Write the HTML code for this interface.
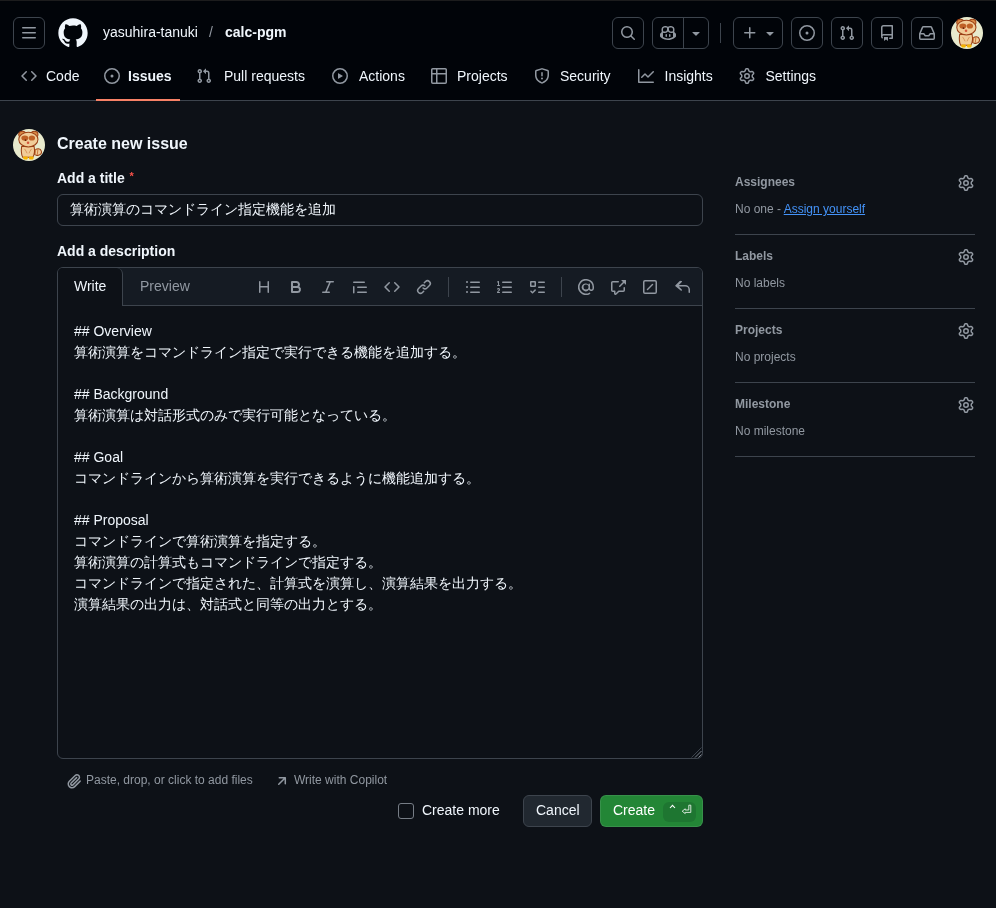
<!DOCTYPE html>
<html><head><meta charset="utf-8">
<style>
*{box-sizing:border-box;margin:0;padding:0}
html{width:996px;height:908px;overflow:hidden;background:#0d1117;font-family:"Liberation Sans",sans-serif;color:#f0f6fc;font-size:14px;line-height:20px}
.a{position:absolute}
body{will-change:transform;width:996px;height:908px;overflow:hidden;background:#0d1117;font-family:"Liberation Sans",sans-serif;color:#f0f6fc;font-size:14px;line-height:20px}
svg{display:block}
.hdr{position:absolute;left:0;top:0;width:996px;height:101px;background:#010409;border-bottom:1px solid #3d444d}
.topline{position:absolute;left:0;top:0;width:996px;height:1px;background:#1c1c1d}
.btn{position:absolute;top:17px;height:32px;border:1px solid #3d444d;border-radius:6px}
.ic{fill:#9198a1}
.nav{position:absolute;top:66px;height:20px;font-size:14px;line-height:20px;color:#f0f6fc;white-space:nowrap}
.navi{position:absolute;top:68px}
</style></head>
<body>
<div class="hdr"></div>
<div class="topline"></div>

<!-- hamburger -->
<div class="btn" style="left:13px;width:32px"></div>
<svg class="a" style="left:21px;top:25px" width="16" height="16" viewBox="0 0 16 16"><path class="ic" d="M1 2.75A.75.75 0 0 1 1.75 2h12.5a.75.75 0 0 1 0 1.5H1.75A.75.75 0 0 1 1 2.75Zm0 5A.75.75 0 0 1 1.75 7h12.5a.75.75 0 0 1 0 1.5H1.75A.75.75 0 0 1 1 7.75ZM1.75 12h12.5a.75.75 0 0 1 0 1.5H1.75a.75.75 0 0 1 0-1.5Z"/></svg>
<!-- github logo -->
<svg class="a" style="left:57px;top:17px" width="32" height="32" viewBox="0 0 24 24"><path fill="#f0f6fc" d="M12 1C5.923 1 1 5.923 1 12c0 4.867 3.149 8.979 7.521 10.436.55.096.756-.233.756-.522 0-.262-.013-1.128-.013-2.049-2.764.509-3.479-.674-3.699-1.292-.124-.317-.66-1.293-1.127-1.554-.385-.207-.936-.715-.014-.729.866-.014 1.485.797 1.691 1.128.99 1.663 2.571 1.196 3.204.907.096-.715.385-1.196.701-1.471-2.448-.275-5.005-1.224-5.005-5.432 0-1.196.426-2.186 1.128-2.956-.111-.275-.496-1.402.11-2.915 0 0 .921-.288 3.024 1.128a10.193 10.193 0 0 1 2.75-.371c.936 0 1.871.123 2.75.371 2.104-1.43 3.025-1.128 3.025-1.128.605 1.513.221 2.64.111 2.915.701.77 1.127 1.747 1.127 2.956 0 4.222-2.571 5.157-5.019 5.432.399.344.743 1.004.743 2.035 0 1.471-.014 2.654-.014 3.108 0 .289.206.632.756.522C19.851 20.979 23 16.854 23 12c0-6.077-4.922-11-11-11Z"/></svg>
<div class="a" style="left:103px;top:22px;color:#f0f6fc">yasuhira-tanuki</div>
<div class="a" style="left:209px;top:22px;color:#9198a1">/</div>
<div class="a" style="left:225px;top:22px;color:#f0f6fc;font-weight:bold">calc-pgm</div>

<!-- right header buttons -->
<div class="btn" style="left:612px;width:32px"></div>
<div class="btn" style="left:652px;width:57px"></div>
<div class="a" style="left:683px;top:18px;width:1px;height:30px;background:#3d444d"></div>
<div class="a" style="left:720px;top:23px;width:1px;height:20px;background:#3d444d"></div>
<div class="btn" style="left:733px;width:50px"></div>
<div class="btn" style="left:791px;width:32px"></div>
<div class="btn" style="left:831px;width:32px"></div>
<div class="btn" style="left:871px;width:32px"></div>
<div class="btn" style="left:911px;width:32px"></div>

<!-- nav -->
<div class="a" style="left:96px;top:99px;width:84px;height:2px;background:#f78166"></div>
<div class="nav" style="left:46px">Code</div>
<div class="nav" style="left:128px;font-weight:bold">Issues</div>
<div class="nav" style="left:224px">Pull requests</div>
<div class="nav" style="left:359px">Actions</div>
<div class="nav" style="left:457px">Projects</div>
<div class="nav" style="left:560px">Security</div>
<div class="nav" style="left:664.5px">Insights</div>
<div class="nav" style="left:765.5px">Settings</div>

<!-- body -->
<div class="a" style="left:57px;top:132px;font-size:16px;line-height:24px;font-weight:bold">Create new issue</div>
<div class="a" style="left:57px;top:168px;font-weight:bold">Add a title</div><div class="a" style="left:129.5px;top:169px;font-size:11px;line-height:14px;font-weight:bold;color:#f85149">*</div>
<div class="a" style="left:57px;top:194px;width:646px;height:32px;border:1px solid #3d444d;border-radius:6px;padding-left:12px;line-height:28px">算術演算のコマンドライン指定機能を追加</div>
<div class="a" style="left:57px;top:241px;font-weight:bold">Add a description</div>

<!-- editor -->
<div class="a" style="left:57px;top:267px;width:646px;height:492px;border:1px solid #3d444d;border-radius:6px;overflow:hidden">
  <div class="a" style="left:0;top:0;width:644px;height:38px;background:#151b23;border-bottom:1px solid #3d444d"></div>
  <div class="a" style="left:0;top:0;width:65px;height:38px;background:#0d1117;border-right:1px solid #3d444d;border-top-right-radius:6px"></div>
</div>
<div class="a" style="left:74px;top:276px">Write</div>
<div class="a" style="left:140px;top:276px;color:#9198a1">Preview</div>

<div class="a" style="left:74px;top:321px;line-height:21px;white-space:pre">## Overview
算術演算をコマンドライン指定で実行できる機能を追加する。

## Background
算術演算は対話形式のみで実行可能となっている。

## Goal
コマンドラインから算術演算を実行できるように機能追加する。

## Proposal
コマンドラインで算術演算を指定する。
算術演算の計算式もコマンドラインで指定する。
コマンドラインで指定された、計算式を演算し、演算結果を出力する。
演算結果の出力は、対話式と同等の出力とする。</div>

<div class="a" style="left:86px;top:771px;font-size:12px;line-height:18px;color:#9198a1">Paste, drop, or click to add files</div>
<div class="a" style="left:294px;top:771px;font-size:12px;line-height:18px;color:#9198a1">Write with Copilot</div>

<div class="a" style="left:398px;top:803px;width:16px;height:16px;border:1px solid #767d86;border-radius:3px"></div>
<div class="a" style="left:422px;top:800px">Create more</div>
<div class="a" style="left:523px;top:795px;width:69px;height:32px;background:#212830;border:1px solid #3d444d;border-radius:6px"></div>
<div class="a" style="left:536px;top:800px">Cancel</div>
<div class="a" style="left:600px;top:795px;width:103px;height:32px;background:#238636;border:1px solid rgba(240,246,252,0.1);border-radius:6px"></div>
<div class="a" style="left:613px;top:800px;color:#fff">Create</div>
<div class="a" style="left:663px;top:802px;width:33px;height:20px;background:#1e7631;border-radius:6px"></div>
<svg class="a" style="left:663px;top:802px" width="33" height="20" viewBox="0 0 33 20"><path d="M7 6 9.5 3.3 12 6" fill="none" stroke="#fff" stroke-width="1.1"/><path d="M25.8 3.2H27.8V10.4H22.2V11.6L19.2 9.2 22.2 6.8V8H25.8Z" fill="none" stroke="#e6f0e8" stroke-width="0.9"/></svg>
<svg class="a" style="left:688px;top:745px" width="14" height="14" viewBox="0 0 14 14"><path d="M3.5 12.5 13.5 2.5" stroke="#3d444d" stroke-width="1"/><path d="M7 12.5 13.5 6M10.5 12.5 13.5 9.5" stroke="#7d848d" stroke-width="1"/></svg>

<!-- sidebar -->
<div class="a" style="left:735px;top:173px;font-size:12px;line-height:18px;font-weight:bold;color:#9198a1">Assignees</div>
<div class="a" style="left:735px;top:200px;font-size:12px;line-height:18px;color:#9198a1">No one - <span style="color:#4493f8;text-decoration:underline">Assign yourself</span></div>
<div class="a" style="left:735px;top:234px;width:240px;height:1px;background:#3d444d"></div>
<div class="a" style="left:735px;top:247px;font-size:12px;line-height:18px;font-weight:bold;color:#9198a1">Labels</div>
<div class="a" style="left:735px;top:274px;font-size:12px;line-height:18px;color:#9198a1">No labels</div>
<div class="a" style="left:735px;top:308px;width:240px;height:1px;background:#3d444d"></div>
<div class="a" style="left:735px;top:321px;font-size:12px;line-height:18px;font-weight:bold;color:#9198a1">Projects</div>
<div class="a" style="left:735px;top:348px;font-size:12px;line-height:18px;color:#9198a1">No projects</div>
<div class="a" style="left:735px;top:382px;width:240px;height:1px;background:#3d444d"></div>
<div class="a" style="left:735px;top:395px;font-size:12px;line-height:18px;font-weight:bold;color:#9198a1">Milestone</div>
<div class="a" style="left:735px;top:422px;font-size:12px;line-height:18px;color:#9198a1">No milestone</div>
<div class="a" style="left:735px;top:456px;width:240px;height:1px;background:#3d444d"></div>


<svg class="a" style="left:620px;top:25px" width="16" height="16" viewBox="0 0 16 16"><path fill="#9198a1" d="M10.68 11.74a6 6 0 0 1-7.922-8.982 6 6 0 0 1 8.982 7.922l3.04 3.04a.749.749 0 0 1-.326 1.275.749.749 0 0 1-.734-.215ZM11.5 7a4.499 4.499 0 1 0-8.997 0A4.499 4.499 0 0 0 11.5 7Z"/></svg>
<svg class="a" style="left:660px;top:25px" width="16" height="16" viewBox="0 0 16 16"><path fill="#9198a1" d="M7.998 15.035c-4.562 0-7.873-2.914-7.998-3.749V9.338c.085-.628.677-1.686 1.588-2.065.013-.07.024-.143.036-.218.029-.183.06-.384.126-.612-.201-.508-.254-1.084-.254-1.656 0-.87.128-1.769.693-2.484.579-.733 1.494-1.124 2.724-1.261 1.206-.134 2.262.034 2.944.765.05.053.096.108.139.165.044-.057.094-.112.143-.165.682-.731 1.738-.899 2.944-.765 1.23.137 2.145.528 2.724 1.261.566.715.693 1.614.693 2.484 0 .572-.053 1.148-.254 1.656.066.228.098.429.126.612.012.076.024.148.037.218.924.385 1.522 1.471 1.591 2.095v1.872c0 .766-3.351 3.795-8.002 3.795Zm0-1.485c2.28 0 4.584-1.11 5.002-1.433V7.862l-.023-.116c-.49.21-1.075.291-1.727.291-1.146 0-2.059-.327-2.71-.991A3.222 3.222 0 0 1 8 6.303a3.24 3.24 0 0 1-.544.743c-.65.664-1.563.991-2.71.991-.652 0-1.236-.081-1.727-.291l-.023.116v4.255c.419.323 2.722 1.433 5.002 1.433ZM6.762 2.83c-.193-.206-.637-.413-1.682-.297-1.019.113-1.479.404-1.713.7-.247.312-.369.789-.369 1.554 0 .793.129 1.171.308 1.371.162.181.519.379 1.442.379.853 0 1.339-.235 1.638-.54.315-.322.527-.827.617-1.553.117-.935-.037-1.395-.241-1.614Zm4.155-.297c-1.044-.116-1.488.091-1.681.297-.204.219-.359.679-.242 1.614.091.726.303 1.231.618 1.553.299.305.784.54 1.638.54.922 0 1.28-.198 1.442-.379.179-.2.308-.578.308-1.371 0-.765-.123-1.242-.37-1.554-.233-.296-.693-.587-1.713-.7Z M6.25 9.037a.75.75 0 0 1 .75.75v1.501a.75.75 0 0 1-1.5 0V9.787a.75.75 0 0 1 .75-.75Zm4.25.75v1.501a.75.75 0 0 1-1.5 0V9.787a.75.75 0 0 1 1.5 0Z"/></svg>
<svg class="a" style="left:688px;top:25px" width="16" height="16" viewBox="0 0 16 16"><path fill="#9198a1" d="m4.427 7.427 3.396 3.396a.25.25 0 0 0 .354 0l3.396-3.396A.25.25 0 0 0 11.396 7H4.604a.25.25 0 0 0-.177.427Z"/></svg>
<svg class="a" style="left:742px;top:25px" width="16" height="16" viewBox="0 0 16 16"><path fill="#9198a1" d="M7.75 2a.75.75 0 0 1 .75.75V7h4.25a.75.75 0 0 1 0 1.5H8.5v4.25a.75.75 0 0 1-1.5 0V8.5H2.75a.75.75 0 0 1 0-1.5H7V2.75A.75.75 0 0 1 7.75 2Z"/></svg>
<svg class="a" style="left:762px;top:25px" width="16" height="16" viewBox="0 0 16 16"><path fill="#9198a1" d="m4.427 7.427 3.396 3.396a.25.25 0 0 0 .354 0l3.396-3.396A.25.25 0 0 0 11.396 7H4.604a.25.25 0 0 0-.177.427Z"/></svg>
<svg class="a" style="left:799px;top:25px" width="16" height="16" viewBox="0 0 16 16"><path fill="#9198a1" d="M8 9.5a1.5 1.5 0 1 0 0-3 1.5 1.5 0 0 0 0 3Z M8 0a8 8 0 1 1 0 16A8 8 0 0 1 8 0ZM1.5 8a6.5 6.5 0 1 0 13 0 6.5 6.5 0 0 0-13 0Z"/></svg>
<svg class="a" style="left:839px;top:25px" width="16" height="16" viewBox="0 0 16 16"><path fill="#9198a1" d="M1.5 3.25a2.25 2.25 0 1 1 3 2.122v5.256a2.251 2.251 0 1 1-1.5 0V5.372A2.25 2.25 0 0 1 1.5 3.25Zm5.677-.177L9.573.677A.25.25 0 0 1 10 .854V2.5h1A2.5 2.5 0 0 1 13.5 5v5.628a2.251 2.251 0 1 1-1.5 0V5a1 1 0 0 0-1-1h-1v1.646a.25.25 0 0 1-.427.177L7.177 3.427a.25.25 0 0 1 0-.354ZM3.75 2.5a.75.75 0 1 0 0 1.5.75.75 0 0 0 0-1.5Zm0 9.5a.75.75 0 1 0 0 1.5.75.75 0 0 0 0-1.5Zm8.25.75a.75.75 0 1 0 1.5 0 .75.75 0 0 0-1.5 0Z"/></svg>
<svg class="a" style="left:879px;top:25px" width="16" height="16" viewBox="0 0 16 16"><path fill="#9198a1" d="M2 2.5A2.5 2.5 0 0 1 4.5 0h8.75a.75.75 0 0 1 .75.75v12.5a.75.75 0 0 1-.75.75h-2.5a.75.75 0 0 1 0-1.5h1.75v-2h-8a1 1 0 0 0-.714 1.7.75.75 0 1 1-1.072 1.05A2.495 2.495 0 0 1 2 11.5Zm10.5-1h-8a1 1 0 0 0-1 1v6.708A2.486 2.486 0 0 1 4.5 9h8ZM5 12.25a.25.25 0 0 1 .25-.25h3.5a.25.25 0 0 1 .25.25v3.25a.25.25 0 0 1-.4.2l-1.45-1.087a.249.249 0 0 0-.3 0L5.4 15.7a.25.25 0 0 1-.4-.2Z"/></svg>
<svg class="a" style="left:919px;top:25px" width="16" height="16" viewBox="0 0 16 16"><path fill="#9198a1" d="M2.8 2.06A1.75 1.75 0 0 1 4.41 1h7.18c.7 0 1.333.417 1.61 1.06l2.74 6.395c.04.093.06.194.06.295v4.5A1.75 1.75 0 0 1 14.25 15H1.75A1.75 1.75 0 0 1 0 13.25v-4.5c0-.101.02-.202.06-.295Zm1.61.44a.25.25 0 0 0-.23.152L1.887 8H4.75a.75.75 0 0 1 .6.3L6.625 10h2.75l1.275-1.7a.75.75 0 0 1 .6-.3h2.863L11.82 2.652a.25.25 0 0 0-.23-.152Zm10.09 7h-2.875l-1.275 1.7a.75.75 0 0 1-.6.3h-3.5a.75.75 0 0 1-.6-.3L4.375 9.5H1.5v3.75c0 .138.112.25.25.25h12.5a.25.25 0 0 0 .25-.25Z"/></svg>
<svg class="a" style="left:21px;top:68px" width="16" height="16" viewBox="0 0 16 16"><path fill="#9198a1" d="m11.28 3.22 4.25 4.25a.75.75 0 0 1 0 1.06l-4.25 4.25a.749.749 0 0 1-1.275-.326.749.749 0 0 1 .215-.734L13.94 8l-3.72-3.72a.749.749 0 0 1 .326-1.275.749.749 0 0 1 .734.215Zm-6.56 0a.751.751 0 0 1 1.042.018.751.751 0 0 1 .018 1.042L2.06 8l3.72 3.72a.749.749 0 0 1-.326 1.275.749.749 0 0 1-.734-.215L.47 8.53a.75.75 0 0 1 0-1.06Z"/></svg>
<svg class="a" style="left:104px;top:68px" width="16" height="16" viewBox="0 0 16 16"><path fill="#9198a1" d="M8 9.5a1.5 1.5 0 1 0 0-3 1.5 1.5 0 0 0 0 3Z M8 0a8 8 0 1 1 0 16A8 8 0 0 1 8 0ZM1.5 8a6.5 6.5 0 1 0 13 0 6.5 6.5 0 0 0-13 0Z"/></svg>
<svg class="a" style="left:196px;top:68px" width="16" height="16" viewBox="0 0 16 16"><path fill="#9198a1" d="M1.5 3.25a2.25 2.25 0 1 1 3 2.122v5.256a2.251 2.251 0 1 1-1.5 0V5.372A2.25 2.25 0 0 1 1.5 3.25Zm5.677-.177L9.573.677A.25.25 0 0 1 10 .854V2.5h1A2.5 2.5 0 0 1 13.5 5v5.628a2.251 2.251 0 1 1-1.5 0V5a1 1 0 0 0-1-1h-1v1.646a.25.25 0 0 1-.427.177L7.177 3.427a.25.25 0 0 1 0-.354ZM3.75 2.5a.75.75 0 1 0 0 1.5.75.75 0 0 0 0-1.5Zm0 9.5a.75.75 0 1 0 0 1.5.75.75 0 0 0 0-1.5Zm8.25.75a.75.75 0 1 0 1.5 0 .75.75 0 0 0-1.5 0Z"/></svg>
<svg class="a" style="left:332px;top:68px" width="16" height="16" viewBox="0 0 16 16"><path fill="#9198a1" d="M8 0a8 8 0 1 1 0 16A8 8 0 0 1 8 0ZM1.5 8a6.5 6.5 0 1 0 13 0 6.5 6.5 0 0 0-13 0Zm4.879-2.773 4.264 2.559a.25.25 0 0 1 0 .428l-4.264 2.559A.25.25 0 0 1 6 10.559V5.442a.25.25 0 0 1 .379-.215Z"/></svg>
<svg class="a" style="left:431px;top:68px" width="16" height="16" viewBox="0 0 16 16"><path fill="#9198a1" d="M0 1.75C0 .784.784 0 1.75 0h12.5C15.216 0 16 .784 16 1.75v12.5A1.75 1.75 0 0 1 14.25 16H1.75A1.75 1.75 0 0 1 0 14.25ZM6.5 6.5v8h7.75a.25.25 0 0 0 .25-.25V6.5Zm8-1.5V1.75a.25.25 0 0 0-.25-.25H6.5V5Zm-13 1.5v7.75c0 .138.112.25.25.25H5v-8ZM5 5V1.5H1.75a.25.25 0 0 0-.25.25V5Z"/></svg>
<svg class="a" style="left:534px;top:68px" width="16" height="16" viewBox="0 0 16 16"><path fill="#9198a1" d="M7.467.133a1.748 1.748 0 0 1 1.066 0l5.25 1.68A1.75 1.75 0 0 1 15 3.48V7c0 1.566-.32 3.182-1.303 4.682-.983 1.498-2.585 2.813-5.032 3.855a1.697 1.697 0 0 1-1.33 0c-2.447-1.042-4.049-2.357-5.032-3.855C1.32 10.182 1 8.566 1 7V3.48a1.755 1.755 0 0 1 1.217-1.667Zm.61 1.429a.25.25 0 0 0-.153 0l-5.25 1.68a.25.25 0 0 0-.174.238V7c0 1.358.275 2.666 1.057 3.86.784 1.194 2.121 2.34 4.366 3.297a.196.196 0 0 0 .154 0c2.245-.956 3.582-2.104 4.366-3.298C13.225 9.666 13.5 8.36 13.5 7V3.48a.251.251 0 0 0-.174-.237l-5.25-1.68ZM8.75 4.75v3a.75.75 0 0 1-1.5 0v-3a.75.75 0 0 1 1.5 0ZM9 10.5a1 1 0 1 1-2 0 1 1 0 0 1 2 0Z"/></svg>
<svg class="a" style="left:638px;top:68px" width="16" height="16" viewBox="0 0 16 16"><path fill="#9198a1" d="M1.5 1.75V13.5h13.75a.75.75 0 0 1 0 1.5H.75a.75.75 0 0 1-.75-.75V1.75a.75.75 0 0 1 1.5 0Zm14.28 2.53-5.25 5.25a.75.75 0 0 1-1.06 0L7 7.06 4.28 9.78a.751.751 0 0 1-1.042-.018.751.751 0 0 1-.018-1.042l3.25-3.25a.75.75 0 0 1 1.06 0L10 7.94l4.72-4.72a.751.751 0 0 1 1.042.018.751.751 0 0 1 .018 1.042Z"/></svg>
<svg class="a" style="left:739px;top:68px" width="16" height="16" viewBox="0 0 16 16"><path fill="#9198a1" d="M8 0a8.2 8.2 0 0 1 .701.031C9.444.095 9.99.645 10.16 1.29l.288 1.107c.018.066.079.158.212.224.231.114.454.243.668.386.123.082.233.09.299.071l1.103-.303c.644-.176 1.392.021 1.82.63.27.385.506.792.704 1.218.315.675.111 1.422-.364 1.891l-.814.806c-.049.048-.098.147-.088.294.016.257.016.515 0 .772-.01.147.038.246.088.294l.814.806c.475.469.679 1.216.364 1.891a7.977 7.977 0 0 1-.704 1.217c-.428.61-1.176.807-1.82.63l-1.102-.302c-.067-.019-.177-.011-.3.071a5.909 5.909 0 0 1-.668.386c-.133.066-.194.158-.211.224l-.29 1.106c-.168.646-.715 1.196-1.458 1.26a8.006 8.006 0 0 1-1.402 0c-.743-.064-1.289-.614-1.458-1.26l-.289-1.106c-.018-.066-.079-.158-.212-.224a5.738 5.738 0 0 1-.668-.386c-.123-.082-.233-.09-.299-.071l-1.103.303c-.644.176-1.392-.021-1.82-.63a8.12 8.12 0 0 1-.704-1.218c-.315-.675-.111-1.422.363-1.891l.815-.806c.05-.048.098-.147.088-.294a6.214 6.214 0 0 1 0-.772c.01-.147-.038-.246-.088-.294l-.815-.806C.635 6.045.431 5.298.746 4.623a7.92 7.92 0 0 1 .704-1.217c.428-.61 1.176-.807 1.82-.63l1.102.302c.067.019.177.011.3-.071.214-.143.437-.272.668-.386.133-.066.194-.158.211-.224l.29-1.106C6.009.645 6.556.095 7.299.03 7.53.01 7.764 0 8 0Zm-.571 1.525c-.036.003-.108.036-.137.146l-.289 1.105c-.147.561-.549.967-.998 1.189-.173.086-.34.183-.5.29-.417.278-.97.423-1.529.27l-1.103-.303c-.109-.03-.175.016-.195.045-.22.312-.412.644-.573.99-.014.031-.021.11.059.19l.815.806c.411.406.562.957.53 1.456a4.709 4.709 0 0 0 0 .582c.032.499-.119 1.05-.53 1.456l-.815.806c-.081.08-.073.159-.059.19.162.346.353.677.573.989.02.03.085.076.195.046l1.102-.303c.56-.153 1.113-.008 1.53.27.161.107.328.204.501.29.447.222.85.629.997 1.189l.289 1.105c.029.109.101.143.137.146a6.6 6.6 0 0 0 1.142 0c.036-.003.108-.036.137-.146l.289-1.105c.147-.561.549-.967.998-1.189.173-.086.34-.183.5-.29.417-.278.97-.423 1.529-.27l1.103.303c.109.029.175-.016.195-.045.22-.313.411-.644.573-.99.014-.031.021-.11-.059-.19l-.815-.806c-.411-.406-.562-.957-.53-1.456a4.709 4.709 0 0 0 0-.582c-.032-.499.119-1.05.53-1.456l.815-.806c.081-.08.073-.159.059-.19a6.464 6.464 0 0 0-.573-.989c-.02-.03-.085-.076-.195-.046l-1.102.303c-.56.153-1.113.008-1.53-.27a4.44 4.44 0 0 0-.501-.29c-.447-.222-.85-.629-.997-1.189l-.289-1.105c-.029-.11-.101-.143-.137-.146a6.6 6.6 0 0 0-1.142 0ZM11 8a3 3 0 1 1-6 0 3 3 0 0 1 6 0ZM9.5 8a1.5 1.5 0 1 0-3.001.001A1.5 1.5 0 0 0 9.5 8Z"/></svg>
<svg class="a" style="left:256px;top:279px" width="16" height="16" viewBox="0 0 16 16"><path fill="#9198a1" d="M3.75 2a.75.75 0 0 1 .75.75V7h7V2.75a.75.75 0 0 1 1.5 0v10.5a.75.75 0 0 1-1.5 0V8.5h-7v4.75a.75.75 0 0 1-1.5 0V2.75A.75.75 0 0 1 3.75 2Z"/></svg>
<svg class="a" style="left:288px;top:279px" width="16" height="16" viewBox="0 0 16 16"><path fill="#9198a1" d="M4 2h4.5a3.501 3.501 0 0 1 2.852 5.53A3.499 3.499 0 0 1 9.5 14H4a1 1 0 0 1-1-1V3a1 1 0 0 1 1-1Zm1 7v3h4.5a1.5 1.5 0 0 0 0-3Zm3.5-2a1.5 1.5 0 0 0 0-3H5v3Z"/></svg>
<svg class="a" style="left:320px;top:279px" width="16" height="16" viewBox="0 0 16 16"><path fill="#9198a1" d="M6 2.75A.75.75 0 0 1 6.75 2h6.5a.75.75 0 0 1 0 1.5h-2.505l-3.858 9H9.25a.75.75 0 0 1 0 1.5h-6.5a.75.75 0 0 1 0-1.5h2.505l3.858-9H6.75A.75.75 0 0 1 6 2.75Z"/></svg>
<svg class="a" style="left:352px;top:279px" width="16" height="16" viewBox="0 0 16 16"><path fill="#9198a1" d="M1.75 2.5h10.5a.75.75 0 0 1 0 1.5H1.75a.75.75 0 0 1 0-1.5Zm4 5h8.5a.75.75 0 0 1 0 1.5h-8.5a.75.75 0 0 1 0-1.5Zm0 5h8.5a.75.75 0 0 1 0 1.5h-8.5a.75.75 0 0 1 0-1.5ZM2.5 7.75v6a.75.75 0 0 1-1.5 0v-6a.75.75 0 0 1 1.5 0Z"/></svg>
<svg class="a" style="left:384px;top:279px" width="16" height="16" viewBox="0 0 16 16"><path fill="#9198a1" d="m11.28 3.22 4.25 4.25a.75.75 0 0 1 0 1.06l-4.25 4.25a.749.749 0 0 1-1.275-.326.749.749 0 0 1 .215-.734L13.94 8l-3.72-3.72a.749.749 0 0 1 .326-1.275.749.749 0 0 1 .734.215Zm-6.56 0a.751.751 0 0 1 1.042.018.751.751 0 0 1 .018 1.042L2.06 8l3.72 3.72a.749.749 0 0 1-.326 1.275.749.749 0 0 1-.734-.215L.47 8.53a.75.75 0 0 1 0-1.06Z"/></svg>
<svg class="a" style="left:416px;top:279px" width="16" height="16" viewBox="0 0 16 16"><path fill="#9198a1" d="m7.775 3.275 1.25-1.25a3.5 3.5 0 1 1 4.95 4.95l-2.5 2.5a3.5 3.5 0 0 1-4.95 0 .751.751 0 0 1 .018-1.042.751.751 0 0 1 1.042-.018 1.998 1.998 0 0 0 2.83 0l2.5-2.5a2.002 2.002 0 0 0-2.83-2.830l-1.25 1.25a.751.751 0 0 1-1.042-.018.751.751 0 0 1-.018-1.042Zm-4.69 9.64a1.998 1.998 0 0 0 2.83 0l1.25-1.25a.751.751 0 0 1 1.042.018.751.751 0 0 1 .018 1.042l-1.25 1.25a3.5 3.5 0 1 1-4.95-4.95l2.5-2.5a3.5 3.5 0 0 1 4.95 0 .751.751 0 0 1-.018 1.042.751.751 0 0 1-1.042.018 1.998 1.998 0 0 0-2.83 0l-2.5 2.5a1.998 1.998 0 0 0 0 2.83Z"/></svg>
<svg class="a" style="left:465px;top:279px" width="16" height="16" viewBox="0 0 16 16"><path fill="#9198a1" d="M5.75 2.5h8.5a.75.75 0 0 1 0 1.5h-8.5a.75.75 0 0 1 0-1.5Zm0 5h8.5a.75.75 0 0 1 0 1.5h-8.5a.75.75 0 0 1 0-1.5Zm0 5h8.5a.75.75 0 0 1 0 1.5h-8.5a.75.75 0 0 1 0-1.5ZM2 14a1 1 0 1 1 0-2 1 1 0 0 1 0 2Zm1-6a1 1 0 1 1-2 0 1 1 0 0 1 2 0ZM2 4a1 1 0 1 1 0-2 1 1 0 0 1 0 2Z"/></svg>
<svg class="a" style="left:497px;top:279px" width="16" height="16" viewBox="0 0 16 16"><path fill="#9198a1" d="M5 3.25a.75.75 0 0 1 .75-.75h8.5a.75.75 0 0 1 0 1.5h-8.5A.75.75 0 0 1 5 3.25Zm0 5a.75.75 0 0 1 .75-.75h8.5a.75.75 0 0 1 0 1.5h-8.5A.75.75 0 0 1 5 8.25Zm0 5a.75.75 0 0 1 .75-.75h8.5a.75.75 0 0 1 0 1.5h-8.5a.75.75 0 0 1-.75-.75ZM.924 10.32a.5.5 0 0 1-.851-.525l.001-.001.001-.002.002-.004.007-.011c.097-.144.215-.273.348-.384.228-.19.588-.392 1.068-.392.468 0 .858.181 1.126.484.259.294.377.673.377 1.038 0 .987-.686 1.495-1.156 1.845l-.047.035c-.303.225-.522.4-.654.597h1.357a.5.5 0 0 1 0 1H.5a.5.5 0 0 1-.5-.5c0-1.005.692-1.52 1.167-1.875l.035-.025c.531-.396.8-.625.8-1.078a.57.57 0 0 0-.126-.376C1.807 10.3 1.703 10.25 1.5 10.25a.658.658 0 0 0-.429.163.835.835 0 0 0-.144.153ZM2.003 2.5V6h.503a.5.5 0 0 1 0 1H.5a.5.5 0 0 1 0-1h.503V3.308l-.28.14a.5.5 0 0 1-.446-.895l1.003-.5a.5.5 0 0 1 .723.447Z"/></svg>
<svg class="a" style="left:529px;top:279px" width="16" height="16" viewBox="0 0 16 16"><path fill="#9198a1" d="M2 2h4a1 1 0 0 1 1 1v4a1 1 0 0 1-1 1H2a1 1 0 0 1-1-1V3a1 1 0 0 1 1-1Zm4.655 8.595a.75.75 0 0 1 0 1.06L4.03 14.28a.75.75 0 0 1-1.06 0l-1.5-1.5a.749.749 0 0 1 .326-1.275.749.749 0 0 1 .734.215l.97.97 2.095-2.095a.75.75 0 0 1 1.06 0ZM9.75 2.5h5.5a.75.75 0 0 1 0 1.5h-5.5a.75.75 0 0 1 0-1.5Zm0 5h5.5a.75.75 0 0 1 0 1.5h-5.5a.75.75 0 0 1 0-1.5Zm0 5h5.5a.75.75 0 0 1 0 1.5h-5.5a.75.75 0 0 1 0-1.5Zm-7.25-9v3h3v-3Z"/></svg>
<svg class="a" style="left:578px;top:279px" width="16" height="16" viewBox="0 0 16 16"><path fill="#9198a1" d="M4.75 2.37a6.501 6.501 0 0 0 6.5 11.26.75.75 0 0 1 .75 1.298A7.999 7.999 0 0 1 .989 4.148 8 8 0 0 1 16 7.75v1.5a2.75 2.75 0 0 1-5.072 1.475 3.999 3.999 0 0 1-6.65-4.4 4 4 0 0 1 6.222-.687V5.25a.75.75 0 0 1 1.5 0v4a1.25 1.25 0 0 0 2.5 0v-1.5a6.5 6.5 0 0 0-9.75-5.38ZM10.5 8a2.5 2.5 0 1 0-5 0 2.5 2.5 0 0 0 5 0Z"/></svg>
<svg class="a" style="left:610px;top:279px" width="16" height="16" viewBox="0 0 16 16"><path fill="#9198a1" d="M2.75 3.5c-.138 0-.25.112-.25.25v7.5c0 .138.112.25.25.25h2a.75.75 0 0 1 .75.75v2.19l2.72-2.72a.749.749 0 0 1 .53-.22h4.5a.25.25 0 0 0 .25-.25v-2.5a.75.75 0 0 1 1.5 0v2.5A1.75 1.75 0 0 1 13.25 13H9.06l-2.573 2.573A1.458 1.458 0 0 1 4 14.543V13H2.75A1.75 1.75 0 0 1 1 11.25v-7.5C1 2.784 1.784 2 2.75 2h5.5a.75.75 0 0 1 0 1.5ZM16 1.25v4.146a.25.25 0 0 1-.427.177L14.03 4.03l-3.75 3.75a.749.749 0 0 1-1.275-.326.749.749 0 0 1 .215-.734l3.75-3.75-1.543-1.543A.25.25 0 0 1 11.604 1h4.146a.25.25 0 0 1 .25.25Z"/></svg>
<svg class="a" style="left:642px;top:279px" width="16" height="16" viewBox="0 0 16 16"><rect x="1.75" y="1.75" width="12.5" height="12.5" rx="1.25" fill="none" stroke="#9198a1" stroke-width="1.5"/><path d="M5.5 10.5 10.5 5.5" stroke="#9198a1" stroke-width="1.5" stroke-linecap="round"/></svg>
<svg class="a" style="left:675px;top:279px" width="16" height="16" viewBox="0 0 16 16"><path fill="#9198a1" d="M6.78 1.97a.75.75 0 0 1 0 1.06L3.81 6h6.44A4.75 4.75 0 0 1 15 10.75v2.5a.75.75 0 0 1-1.5 0v-2.5a3.25 3.25 0 0 0-3.25-3.25H3.81l2.97 2.97a.749.749 0 0 1-.326 1.275.749.749 0 0 1-.734-.215L.47 7.28a.75.75 0 0 1 0-1.06l4.25-4.25a.75.75 0 0 1 1.06 0Z"/></svg>
<div class="a" style="left:448px;top:277px;width:1px;height:20px;background:#3d444d"></div>
<div class="a" style="left:561px;top:277px;width:1px;height:20px;background:#3d444d"></div>
<svg class="a" style="left:958px;top:175px" width="16" height="16" viewBox="0 0 16 16"><path fill="#9198a1" d="M8 0a8.2 8.2 0 0 1 .701.031C9.444.095 9.99.645 10.16 1.29l.288 1.107c.018.066.079.158.212.224.231.114.454.243.668.386.123.082.233.09.299.071l1.103-.303c.644-.176 1.392.021 1.82.63.27.385.506.792.704 1.218.315.675.111 1.422-.364 1.891l-.814.806c-.049.048-.098.147-.088.294.016.257.016.515 0 .772-.01.147.038.246.088.294l.814.806c.475.469.679 1.216.364 1.891a7.977 7.977 0 0 1-.704 1.217c-.428.61-1.176.807-1.82.63l-1.102-.302c-.067-.019-.177-.011-.3.071a5.909 5.909 0 0 1-.668.386c-.133.066-.194.158-.211.224l-.29 1.106c-.168.646-.715 1.196-1.458 1.26a8.006 8.006 0 0 1-1.402 0c-.743-.064-1.289-.614-1.458-1.26l-.289-1.106c-.018-.066-.079-.158-.212-.224a5.738 5.738 0 0 1-.668-.386c-.123-.082-.233-.09-.299-.071l-1.103.303c-.644.176-1.392-.021-1.82-.63a8.12 8.12 0 0 1-.704-1.218c-.315-.675-.111-1.422.363-1.891l.815-.806c.05-.048.098-.147.088-.294a6.214 6.214 0 0 1 0-.772c.01-.147-.038-.246-.088-.294l-.815-.806C.635 6.045.431 5.298.746 4.623a7.92 7.92 0 0 1 .704-1.217c.428-.61 1.176-.807 1.82-.63l1.102.302c.067.019.177.011.3-.071.214-.143.437-.272.668-.386.133-.066.194-.158.211-.224l.29-1.106C6.009.645 6.556.095 7.299.03 7.53.01 7.764 0 8 0Zm-.571 1.525c-.036.003-.108.036-.137.146l-.289 1.105c-.147.561-.549.967-.998 1.189-.173.086-.34.183-.5.29-.417.278-.97.423-1.529.27l-1.103-.303c-.109-.03-.175.016-.195.045-.22.312-.412.644-.573.99-.014.031-.021.11.059.19l.815.806c.411.406.562.957.53 1.456a4.709 4.709 0 0 0 0 .582c.032.499-.119 1.05-.53 1.456l-.815.806c-.081.08-.073.159-.059.19.162.346.353.677.573.989.02.03.085.076.195.046l1.102-.303c.56-.153 1.113-.008 1.53.27.161.107.328.204.501.29.447.222.85.629.997 1.189l.289 1.105c.029.109.101.143.137.146a6.6 6.6 0 0 0 1.142 0c.036-.003.108-.036.137-.146l.289-1.105c.147-.561.549-.967.998-1.189.173-.086.34-.183.5-.29.417-.278.97-.423 1.529-.27l1.103.303c.109.029.175-.016.195-.045.22-.313.411-.644.573-.99.014-.031.021-.11-.059-.19l-.815-.806c-.411-.406-.562-.957-.53-1.456a4.709 4.709 0 0 0 0-.582c-.032-.499.119-1.05.53-1.456l.815-.806c.081-.08.073-.159.059-.19a6.464 6.464 0 0 0-.573-.989c-.02-.03-.085-.076-.195-.046l-1.102.303c-.56.153-1.113.008-1.53-.27a4.44 4.44 0 0 0-.501-.29c-.447-.222-.85-.629-.997-1.189l-.289-1.105c-.029-.11-.101-.143-.137-.146a6.6 6.6 0 0 0-1.142 0ZM11 8a3 3 0 1 1-6 0 3 3 0 0 1 6 0ZM9.5 8a1.5 1.5 0 1 0-3.001.001A1.5 1.5 0 0 0 9.5 8Z"/></svg>
<svg class="a" style="left:958px;top:249px" width="16" height="16" viewBox="0 0 16 16"><path fill="#9198a1" d="M8 0a8.2 8.2 0 0 1 .701.031C9.444.095 9.99.645 10.16 1.29l.288 1.107c.018.066.079.158.212.224.231.114.454.243.668.386.123.082.233.09.299.071l1.103-.303c.644-.176 1.392.021 1.82.63.27.385.506.792.704 1.218.315.675.111 1.422-.364 1.891l-.814.806c-.049.048-.098.147-.088.294.016.257.016.515 0 .772-.01.147.038.246.088.294l.814.806c.475.469.679 1.216.364 1.891a7.977 7.977 0 0 1-.704 1.217c-.428.61-1.176.807-1.82.63l-1.102-.302c-.067-.019-.177-.011-.3.071a5.909 5.909 0 0 1-.668.386c-.133.066-.194.158-.211.224l-.29 1.106c-.168.646-.715 1.196-1.458 1.26a8.006 8.006 0 0 1-1.402 0c-.743-.064-1.289-.614-1.458-1.26l-.289-1.106c-.018-.066-.079-.158-.212-.224a5.738 5.738 0 0 1-.668-.386c-.123-.082-.233-.09-.299-.071l-1.103.303c-.644.176-1.392-.021-1.82-.63a8.12 8.12 0 0 1-.704-1.218c-.315-.675-.111-1.422.363-1.891l.815-.806c.05-.048.098-.147.088-.294a6.214 6.214 0 0 1 0-.772c.01-.147-.038-.246-.088-.294l-.815-.806C.635 6.045.431 5.298.746 4.623a7.92 7.92 0 0 1 .704-1.217c.428-.61 1.176-.807 1.82-.63l1.102.302c.067.019.177.011.3-.071.214-.143.437-.272.668-.386.133-.066.194-.158.211-.224l.29-1.106C6.009.645 6.556.095 7.299.03 7.53.01 7.764 0 8 0Zm-.571 1.525c-.036.003-.108.036-.137.146l-.289 1.105c-.147.561-.549.967-.998 1.189-.173.086-.34.183-.5.29-.417.278-.97.423-1.529.27l-1.103-.303c-.109-.03-.175.016-.195.045-.22.312-.412.644-.573.99-.014.031-.021.11.059.19l.815.806c.411.406.562.957.53 1.456a4.709 4.709 0 0 0 0 .582c.032.499-.119 1.05-.53 1.456l-.815.806c-.081.08-.073.159-.059.19.162.346.353.677.573.989.02.03.085.076.195.046l1.102-.303c.56-.153 1.113-.008 1.53.27.161.107.328.204.501.29.447.222.85.629.997 1.189l.289 1.105c.029.109.101.143.137.146a6.6 6.6 0 0 0 1.142 0c.036-.003.108-.036.137-.146l.289-1.105c.147-.561.549-.967.998-1.189.173-.086.34-.183.5-.29.417-.278.97-.423 1.529-.27l1.103.303c.109.029.175-.016.195-.045.22-.313.411-.644.573-.99.014-.031.021-.11-.059-.19l-.815-.806c-.411-.406-.562-.957-.53-1.456a4.709 4.709 0 0 0 0-.582c-.032-.499.119-1.05.53-1.456l.815-.806c.081-.08.073-.159.059-.19a6.464 6.464 0 0 0-.573-.989c-.02-.03-.085-.076-.195-.046l-1.102.303c-.56.153-1.113.008-1.53-.27a4.44 4.44 0 0 0-.501-.29c-.447-.222-.85-.629-.997-1.189l-.289-1.105c-.029-.11-.101-.143-.137-.146a6.6 6.6 0 0 0-1.142 0ZM11 8a3 3 0 1 1-6 0 3 3 0 0 1 6 0ZM9.5 8a1.5 1.5 0 1 0-3.001.001A1.5 1.5 0 0 0 9.5 8Z"/></svg>
<svg class="a" style="left:958px;top:323px" width="16" height="16" viewBox="0 0 16 16"><path fill="#9198a1" d="M8 0a8.2 8.2 0 0 1 .701.031C9.444.095 9.99.645 10.16 1.29l.288 1.107c.018.066.079.158.212.224.231.114.454.243.668.386.123.082.233.09.299.071l1.103-.303c.644-.176 1.392.021 1.82.63.27.385.506.792.704 1.218.315.675.111 1.422-.364 1.891l-.814.806c-.049.048-.098.147-.088.294.016.257.016.515 0 .772-.01.147.038.246.088.294l.814.806c.475.469.679 1.216.364 1.891a7.977 7.977 0 0 1-.704 1.217c-.428.61-1.176.807-1.82.63l-1.102-.302c-.067-.019-.177-.011-.3.071a5.909 5.909 0 0 1-.668.386c-.133.066-.194.158-.211.224l-.29 1.106c-.168.646-.715 1.196-1.458 1.26a8.006 8.006 0 0 1-1.402 0c-.743-.064-1.289-.614-1.458-1.26l-.289-1.106c-.018-.066-.079-.158-.212-.224a5.738 5.738 0 0 1-.668-.386c-.123-.082-.233-.09-.299-.071l-1.103.303c-.644.176-1.392-.021-1.82-.63a8.12 8.12 0 0 1-.704-1.218c-.315-.675-.111-1.422.363-1.891l.815-.806c.05-.048.098-.147.088-.294a6.214 6.214 0 0 1 0-.772c.01-.147-.038-.246-.088-.294l-.815-.806C.635 6.045.431 5.298.746 4.623a7.92 7.92 0 0 1 .704-1.217c.428-.61 1.176-.807 1.82-.63l1.102.302c.067.019.177.011.3-.071.214-.143.437-.272.668-.386.133-.066.194-.158.211-.224l.29-1.106C6.009.645 6.556.095 7.299.03 7.53.01 7.764 0 8 0Zm-.571 1.525c-.036.003-.108.036-.137.146l-.289 1.105c-.147.561-.549.967-.998 1.189-.173.086-.34.183-.5.29-.417.278-.97.423-1.529.27l-1.103-.303c-.109-.03-.175.016-.195.045-.22.312-.412.644-.573.99-.014.031-.021.11.059.19l.815.806c.411.406.562.957.53 1.456a4.709 4.709 0 0 0 0 .582c.032.499-.119 1.05-.53 1.456l-.815.806c-.081.08-.073.159-.059.19.162.346.353.677.573.989.02.03.085.076.195.046l1.102-.303c.56-.153 1.113-.008 1.53.27.161.107.328.204.501.29.447.222.85.629.997 1.189l.289 1.105c.029.109.101.143.137.146a6.6 6.6 0 0 0 1.142 0c.036-.003.108-.036.137-.146l.289-1.105c.147-.561.549-.967.998-1.189.173-.086.34-.183.5-.29.417-.278.97-.423 1.529-.27l1.103.303c.109.029.175-.016.195-.045.22-.313.411-.644.573-.99.014-.031.021-.11-.059-.19l-.815-.806c-.411-.406-.562-.957-.53-1.456a4.709 4.709 0 0 0 0-.582c-.032-.499.119-1.05.53-1.456l.815-.806c.081-.08.073-.159.059-.19a6.464 6.464 0 0 0-.573-.989c-.02-.03-.085-.076-.195-.046l-1.102.303c-.56.153-1.113.008-1.53-.27a4.44 4.44 0 0 0-.501-.29c-.447-.222-.85-.629-.997-1.189l-.289-1.105c-.029-.11-.101-.143-.137-.146a6.6 6.6 0 0 0-1.142 0ZM11 8a3 3 0 1 1-6 0 3 3 0 0 1 6 0ZM9.5 8a1.5 1.5 0 1 0-3.001.001A1.5 1.5 0 0 0 9.5 8Z"/></svg>
<svg class="a" style="left:958px;top:397px" width="16" height="16" viewBox="0 0 16 16"><path fill="#9198a1" d="M8 0a8.2 8.2 0 0 1 .701.031C9.444.095 9.99.645 10.16 1.29l.288 1.107c.018.066.079.158.212.224.231.114.454.243.668.386.123.082.233.09.299.071l1.103-.303c.644-.176 1.392.021 1.82.63.27.385.506.792.704 1.218.315.675.111 1.422-.364 1.891l-.814.806c-.049.048-.098.147-.088.294.016.257.016.515 0 .772-.01.147.038.246.088.294l.814.806c.475.469.679 1.216.364 1.891a7.977 7.977 0 0 1-.704 1.217c-.428.61-1.176.807-1.82.63l-1.102-.302c-.067-.019-.177-.011-.3.071a5.909 5.909 0 0 1-.668.386c-.133.066-.194.158-.211.224l-.29 1.106c-.168.646-.715 1.196-1.458 1.26a8.006 8.006 0 0 1-1.402 0c-.743-.064-1.289-.614-1.458-1.26l-.289-1.106c-.018-.066-.079-.158-.212-.224a5.738 5.738 0 0 1-.668-.386c-.123-.082-.233-.09-.299-.071l-1.103.303c-.644.176-1.392-.021-1.82-.63a8.12 8.12 0 0 1-.704-1.218c-.315-.675-.111-1.422.363-1.891l.815-.806c.05-.048.098-.147.088-.294a6.214 6.214 0 0 1 0-.772c.01-.147-.038-.246-.088-.294l-.815-.806C.635 6.045.431 5.298.746 4.623a7.92 7.92 0 0 1 .704-1.217c.428-.61 1.176-.807 1.82-.63l1.102.302c.067.019.177.011.3-.071.214-.143.437-.272.668-.386.133-.066.194-.158.211-.224l.29-1.106C6.009.645 6.556.095 7.299.03 7.53.01 7.764 0 8 0Zm-.571 1.525c-.036.003-.108.036-.137.146l-.289 1.105c-.147.561-.549.967-.998 1.189-.173.086-.34.183-.5.29-.417.278-.97.423-1.529.27l-1.103-.303c-.109-.03-.175.016-.195.045-.22.312-.412.644-.573.99-.014.031-.021.11.059.19l.815.806c.411.406.562.957.53 1.456a4.709 4.709 0 0 0 0 .582c.032.499-.119 1.05-.53 1.456l-.815.806c-.081.08-.073.159-.059.19.162.346.353.677.573.989.02.03.085.076.195.046l1.102-.303c.56-.153 1.113-.008 1.53.27.161.107.328.204.501.29.447.222.85.629.997 1.189l.289 1.105c.029.109.101.143.137.146a6.6 6.6 0 0 0 1.142 0c.036-.003.108-.036.137-.146l.289-1.105c.147-.561.549-.967.998-1.189.173-.086.34-.183.5-.29.417-.278.97-.423 1.529-.27l1.103.303c.109.029.175-.016.195-.045.22-.313.411-.644.573-.99.014-.031.021-.11-.059-.19l-.815-.806c-.411-.406-.562-.957-.53-1.456a4.709 4.709 0 0 0 0-.582c-.032-.499.119-1.05.53-1.456l.815-.806c.081-.08.073-.159.059-.19a6.464 6.464 0 0 0-.573-.989c-.02-.03-.085-.076-.195-.046l-1.102.303c-.56.153-1.113.008-1.53-.27a4.44 4.44 0 0 0-.501-.29c-.447-.222-.85-.629-.997-1.189l-.289-1.105c-.029-.11-.101-.143-.137-.146a6.6 6.6 0 0 0-1.142 0ZM11 8a3 3 0 1 1-6 0 3 3 0 0 1 6 0ZM9.5 8a1.5 1.5 0 1 0-3.001.001A1.5 1.5 0 0 0 9.5 8Z"/></svg>
<svg class="a" style="left:66px;top:773px" width="16" height="16" viewBox="0 0 16 16"><path fill="#9198a1" d="M12.212 3.02a1.753 1.753 0 0 0-2.478.003l-5.83 5.83a3.007 3.007 0 0 0-.88 2.127c0 .795.315 1.551.88 2.116.567.567 1.333.89 2.126.89.79 0 1.548-.321 2.116-.89l5.48-5.48a.75.75 0 0 1 1.061 1.06l-5.48 5.48a4.492 4.492 0 0 1-3.177 1.33c-1.2 0-2.345-.487-3.187-1.33a4.483 4.483 0 0 1-1.32-3.177c0-1.195.475-2.341 1.32-3.186l5.83-5.830a3.25 3.25 0 0 1 5.553 2.297c0 .863-.343 1.691-.953 2.301L7.439 12.39c-.375.377-.884.59-1.416.593a1.998 1.998 0 0 1-1.412-.593 1.992 1.992 0 0 1 0-2.828l5.48-5.48a.751.751 0 0 1 1.042.018.751.751 0 0 1 .018 1.042l-5.48 5.48a.492.492 0 0 0 0 .707.499.499 0 0 0 .352.154.51.51 0 0 0 .356-.154l5.833-5.827a1.755 1.755 0 0 0 0-2.481Z"/></svg>
<svg class="a" style="left:274px;top:773px" width="16" height="16" viewBox="0 0 16 16"><path fill="#9198a1" d="M4.53 4.75A.75.75 0 0 1 5.28 4h6.01a.75.75 0 0 1 .75.75v6.01a.75.75 0 0 1-1.5 0v-4.2l-5.26 5.261a.749.749 0 0 1-1.275-.326.749.749 0 0 1 .215-.734L9.48 5.5h-4.2a.75.75 0 0 1-.75-.75Z"/></svg>

<svg class="a" style="left:951px;top:17px" width="32" height="32" viewBox="0 0 100 100">
<circle cx="50" cy="50" r="50" fill="#e8eacd"/>
<ellipse cx="77" cy="72" rx="12" ry="10" fill="#f1cc98" stroke="#9a3e14" stroke-width="3.2" transform="rotate(-15 77 72)"/>
<path d="M71 63l-2 17M78 62l-2 18" stroke="#c9763a" stroke-width="3"/>
<ellipse cx="29" cy="17" rx="11" ry="10" fill="#d98a45" stroke="#9a3e14" stroke-width="3.2"/>
<ellipse cx="67" cy="17" rx="11" ry="10" fill="#d98a45" stroke="#9a3e14" stroke-width="3.2"/>
<path d="M27 55 Q24 75 30 88 L62 88 Q70 75 66 55 Z" fill="#f1cc98" stroke="#9a3e14" stroke-width="3.2"/>
<path d="M36 62q6 8 8 14M58 62q-6 8-8 14" stroke="#c9763a" stroke-width="2" fill="none"/>
<ellipse cx="48" cy="33" rx="30" ry="23" fill="#f1cc98" stroke="#9a3e14" stroke-width="3.2"/>
<ellipse cx="37" cy="28" rx="11" ry="8" fill="#bf6126"/>
<ellipse cx="59" cy="28" rx="10" ry="8" fill="#bf6126"/>
<circle cx="39" cy="35" r="2.8" fill="#6a200a"/>
<ellipse cx="47" cy="43" rx="4" ry="4" fill="#d5553a"/>
<rect x="32" y="86" width="14" height="9" rx="2.5" fill="#f5b300"/>
<rect x="50" y="86" width="14" height="9" rx="2.5" fill="#f5b300"/>
</svg>
<svg class="a" style="left:13px;top:129px" width="32" height="32" viewBox="0 0 100 100">
<circle cx="50" cy="50" r="50" fill="#e8eacd"/>
<ellipse cx="77" cy="72" rx="12" ry="10" fill="#f1cc98" stroke="#9a3e14" stroke-width="3.2" transform="rotate(-15 77 72)"/>
<path d="M71 63l-2 17M78 62l-2 18" stroke="#c9763a" stroke-width="3"/>
<ellipse cx="29" cy="17" rx="11" ry="10" fill="#d98a45" stroke="#9a3e14" stroke-width="3.2"/>
<ellipse cx="67" cy="17" rx="11" ry="10" fill="#d98a45" stroke="#9a3e14" stroke-width="3.2"/>
<path d="M27 55 Q24 75 30 88 L62 88 Q70 75 66 55 Z" fill="#f1cc98" stroke="#9a3e14" stroke-width="3.2"/>
<path d="M36 62q6 8 8 14M58 62q-6 8-8 14" stroke="#c9763a" stroke-width="2" fill="none"/>
<ellipse cx="48" cy="33" rx="30" ry="23" fill="#f1cc98" stroke="#9a3e14" stroke-width="3.2"/>
<ellipse cx="37" cy="28" rx="11" ry="8" fill="#bf6126"/>
<ellipse cx="59" cy="28" rx="10" ry="8" fill="#bf6126"/>
<circle cx="39" cy="35" r="2.8" fill="#6a200a"/>
<ellipse cx="47" cy="43" rx="4" ry="4" fill="#d5553a"/>
<rect x="32" y="86" width="14" height="9" rx="2.5" fill="#f5b300"/>
<rect x="50" y="86" width="14" height="9" rx="2.5" fill="#f5b300"/>
</svg>
</body></html>
